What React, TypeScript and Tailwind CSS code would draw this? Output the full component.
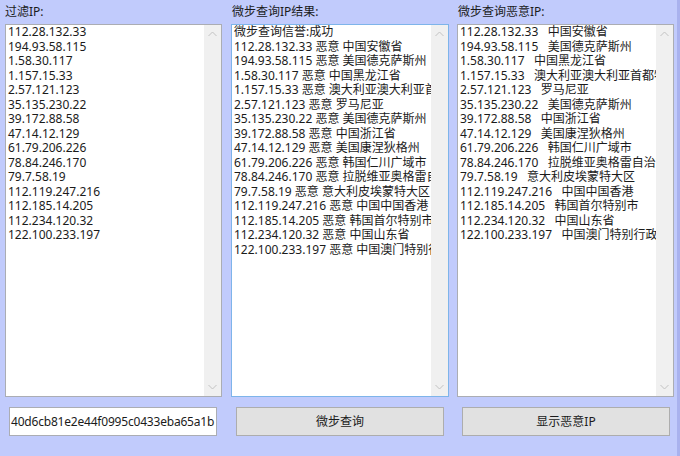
import React from 'react';

const ips = [
  '112.28.132.33',
  '194.93.58.115',
  '1.58.30.117',
  '1.157.15.33',
  '2.57.121.123',
  '35.135.230.22',
  '39.172.88.58',
  '47.14.12.129',
  '61.79.206.226',
  '78.84.246.170',
  '79.7.58.19',
  '112.119.247.216',
  '112.185.14.205',
  '112.234.120.32',
  '122.100.233.197',
];

const places = [
  '中国安徽省',
  '美国德克萨斯州',
  '中国黑龙江省',
  '澳大利亚澳大利亚首都特区',
  '罗马尼亚',
  '美国德克萨斯州',
  '中国浙江省',
  '美国康涅狄格州',
  '韩国仁川广域市',
  '拉脱维亚奥格雷自治市',
  '意大利皮埃蒙特大区',
  '中国中国香港',
  '韩国首尔特别市',
  '中国山东省',
  '中国澳门特别行政区',
];

const resultLines = ['微步查询信誉:成功', ...ips.map((ip, i) => `${ip} 恶意 ${places[i]}`)];
const badLines = ips.map((ip, i) => `${ip}   ${places[i]}`);

function Chevron({ down }: { down?: boolean }) {
  return (
    <svg width="9" height="6" viewBox="0 0 9 6" className="block">
      <path
        d={down ? 'M0.5 1 L4.5 5 L8.5 1' : 'M0.5 5 L4.5 1 L8.5 5'}
        fill="none"
        stroke="#c2c2c2"
        strokeWidth="1"
      />
    </svg>
  );
}

// list box with a fake windows scrollbar on the right
function ListBox({ lines, focused }: { lines: string[]; focused?: boolean }) {
  return (
    <div
      className={`flex h-[373px] border bg-white ${
        focused ? 'border-[#7eb4ea]' : 'border-[#abadb3]'
      }`}
    >
      <div className="flex-1 overflow-hidden whitespace-pre px-[2px] text-[12px] leading-[14.5px] text-[#1b1b1b]">
        {lines.map((l, i) => (
          <div key={i}>{l}</div>
        ))}
      </div>
      <div className="flex w-[17px] flex-col items-center justify-between bg-[#f0f0f0] py-[6px]">
        <Chevron />
        <Chevron down />
      </div>
    </div>
  );
}

export default function App() {
  return (
    <div
      className="flex h-[456px] w-[680px] flex-col border-r-[3px] border-[#a9b2ee] bg-[#c1cbfc] pl-[5px] pt-[5px] text-[#1b1b1b]"
      style={{ fontFamily: '"Noto Sans", "Noto Sans CJK SC", sans-serif' }}
    >
      <div className="flex">
        <div className="w-[217px]">
          <div className="h-[19px] text-[12px] leading-[14px]">过滤IP:</div>
          <ListBox lines={ips} />
        </div>
        <div className="ml-[9px] w-[218px]">
          <div className="h-[19px] pl-[1px] text-[12px] leading-[14px]">微步查询IP结果:</div>
          <ListBox lines={resultLines} focused />
        </div>
        <div className="ml-[8px] w-[217px]">
          <div className="h-[19px] pl-[1px] text-[12px] leading-[14px]">微步查询恶意IP:</div>
          <ListBox lines={badLines} />
        </div>
      </div>

      <div className="mt-[10px] flex items-center">
        <div className="ml-[4px] flex h-[29px] w-[208px] items-center overflow-hidden whitespace-nowrap border border-[#abadb3] bg-white pl-[1px] text-[12px] tracking-[-0.2px]">
          40d6cb81e2e44f0995c0433eba65a1b
        </div>
        <button className="ml-[19px] h-[29px] w-[208px] border border-[#adadad] bg-[#e1e1e1] text-[12px]">
          微步查询
        </button>
        <button className="ml-[18px] h-[29px] w-[208px] border border-[#adadad] bg-[#e1e1e1] text-[12px]">
          显示恶意IP
        </button>
      </div>
    </div>
  );
}
